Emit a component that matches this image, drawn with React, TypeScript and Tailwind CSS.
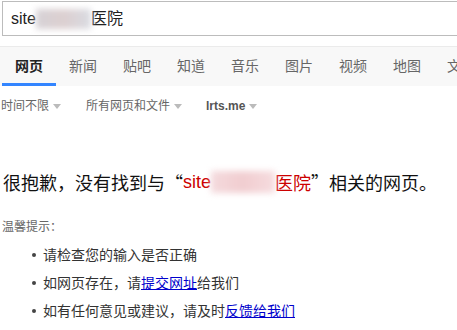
import React from "react";

const tabs = ["网页", "新闻", "贴吧", "知道", "音乐", "图片", "视频", "地图", "文库"];

function Caret() {
  return (
    <span className="ml-[4px] inline-block w-0 h-0 border-x-[4px] border-x-transparent border-t-[5px] border-t-[#bbb] align-middle" />
  );
}

const cjk = { fontFamily: '"Noto Sans CJK SC", sans-serif' };

export default function App() {
  return (
    <div
      className="w-[457px] h-[330px] overflow-hidden bg-white text-[#333]"
      style={{ fontFamily: '"Liberation Sans", "Noto Sans CJK SC", sans-serif' }}
    >
      {/* search box */}
      <div className="pt-[1px] pl-[2px]">
        <div className="w-[600px] h-[35px] border border-[#bcbcbc] flex items-center pl-[8px] text-[16px] text-[#222]">
          <span>site</span>
          <span className="inline-block w-[55px] h-[20px] blur-[3px] bg-gradient-to-r from-[#d6d2d6] via-[#dccfd0] to-[#d9dbe2]" />
          <span>医院</span>
        </div>
      </div>

      {/* nav tabs */}
      <div className="mt-[10px] h-[40px] bg-[#f8f8f8] border-t border-[#ebebeb] flex pl-[2px]">
        {tabs.map((t, i) => (
          <div
            key={t}
            className={
              "w-[54px] shrink-0 flex items-center justify-center pt-[2px] text-[14px] border-b-[3px] " +
              (i === 0
                ? "font-bold text-[#222] border-[#3385ff]"
                : "text-[#666] border-transparent")
            }
          >
            {t}
          </div>
        ))}
      </div>

      {/* filters */}
      <div className="mt-[12px] flex items-center h-[16px] text-[12px] text-[#666] pl-[1px]">
        <span className="w-[85px] shrink-0">
          时间不限
          <Caret />
        </span>
        <span className="w-[120px] shrink-0">
          所有网页和文件
          <Caret />
        </span>
        <span className="font-bold text-[#555]">
          lrts.me
          <Caret />
        </span>
      </div>

      {/* message */}
      <div className="mt-[55px] pl-[3px] text-[18px] text-[#111] leading-[26px] flex items-center whitespace-nowrap">
        <span style={cjk}>很抱歉，没有找到与“</span>
        <span className="text-[#c00]">site</span>
        <span className="inline-block w-[64px] h-[22px] blur-[3px] bg-gradient-to-r from-[#f4dadd] via-[#f1cdd0] to-[#f6dcdf]" />
        <span className="text-[#c00]" style={cjk}>医院</span>
        <span style={cjk}>”相关的网页。</span>
      </div>

      {/* tips */}
      <div className="mt-[24px] pl-[2px] text-[12px] text-[#666] leading-[16px]">温馨提示：</div>
      <div className="mt-[6px] text-[14px] text-[#333] leading-[28px]">
        {[
          <>请检查您的输入是否正确</>,
          <>
            如网页存在，请<a className="text-[#00c] underline">提交网址</a>给我们
          </>,
          <>
            如有任何意见或建议，请及时<a className="text-[#00c] underline">反馈给我们</a>
          </>,
        ].map((item, i) => (
          <div key={i} className="flex items-center">
            <span className="ml-[32px] mr-[7px] w-[4px] h-[4px] rounded-full bg-[#444]" />
            <span>{item}</span>
          </div>
        ))}
      </div>
    </div>
  );
}
